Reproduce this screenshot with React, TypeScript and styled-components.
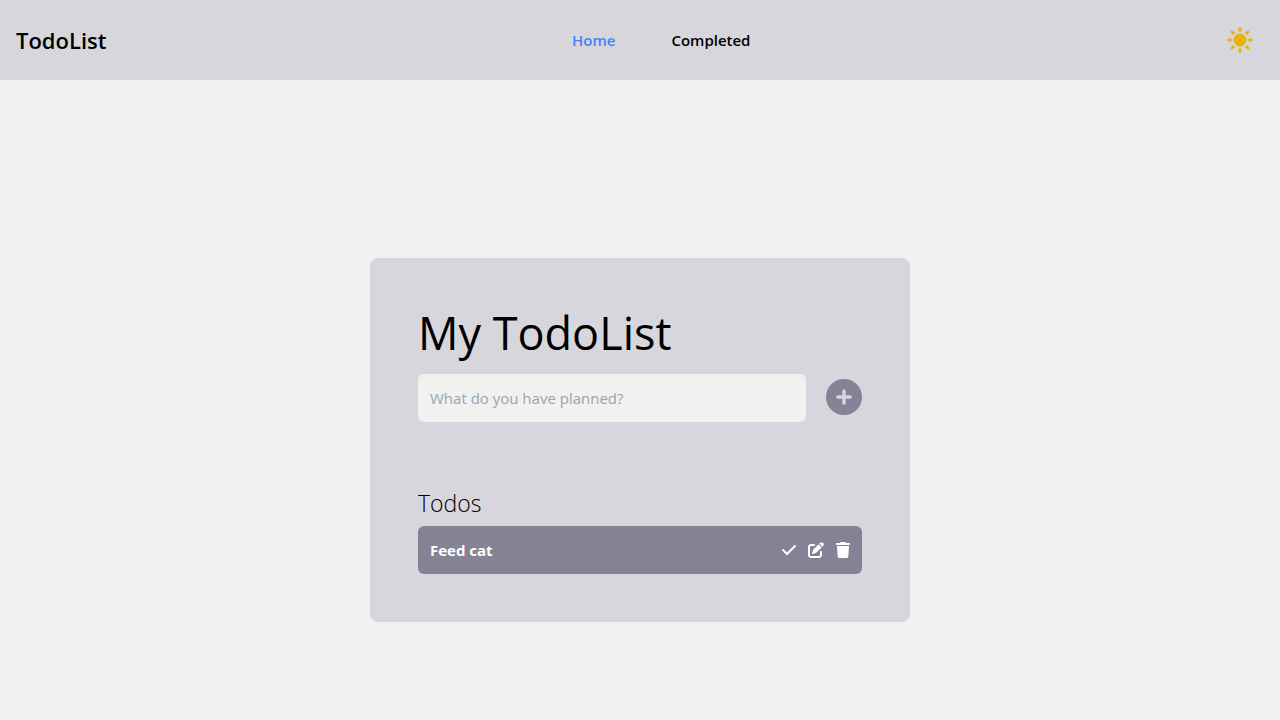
import React, { useState } from "react";
import styled, { createGlobalStyle } from "styled-components";
import { FaCheck, FaCirclePlus, FaPenToSquare, FaTrash } from "react-icons/fa6";
import { HiSun } from "react-icons/hi";

const GlobalStyle = createGlobalStyle`
  *, *::before, *::after { box-sizing: border-box; }
  body {
    margin: 0;
    background: #f1f1ef;
    color: #000;
    font-family: "Segoe UI", "Open Sans", "Noto Sans", sans-serif;
    font-size: 15px;
    line-height: 24px;
  }
  h1, h2, p, ul { margin: 0; padding: 0; }
  ul { list-style: none; }
  button {
    display: flex;
    border: 0;
    padding: 0;
    background: none;
    color: inherit;
    cursor: pointer;
  }
`;

const Header = styled.header`
  display: flex;
  align-items: center;
  justify-content: space-between;
  height: 80px;
  padding: 0 16px;
  background: #d7d6dc;
`;

const Brand = styled.p`
  font-size: 22px;
  line-height: 32px;
  font-weight: 600;
`;

const NavList = styled.ul`
  display: flex;
  gap: 56px;
`;

const NavLink = styled.a<{ $active?: boolean }>`
  color: ${(p) => (p.$active ? "#4480fa" : "#000")};
  font-weight: 600;
  text-decoration: none;
`;

const ThemeButton = styled.button`
  && { padding: 8px; }
  color: #eab308;
`;

const Main = styled.main`
  display: flex;
  align-items: center;
  justify-content: center;
  min-height: calc(100vh - 80px);
  padding: 80px 16px 0;
`;

const Card = styled.section`
  width: 100%;
  max-width: 540px;
  padding: 48px;
  border-radius: 8px;
  background: #d7d6dc;
`;

const Title = styled.h1`
  font-size: 45px;
  line-height: 54px;
  font-weight: 400;
`;

const AddForm = styled.form`
  display: flex;
  align-items: center;
  gap: 20px;
  margin: 14px 0 64px;
`;

const TextInput = styled.input`
  flex: 1;
  min-width: 0;
  height: 48px;
  padding: 0 12px;
  border: 0;
  border-radius: 6px;
  background: #f1f1ef;
  color: #000;
  font: inherit;
  &::placeholder { color: #9ca3af; opacity: 1; }
`;

const AddButton = styled.button`
  && { padding-bottom: 2px; }
  color: #848294;
`;

const ListTitle = styled.h2`
  margin-bottom: 6px;
  font-size: 23px;
  line-height: 34px;
  font-weight: 300;
`;

const TodoItem = styled.li`
  display: flex;
  align-items: center;
  justify-content: space-between;
  height: 48px;
  padding: 0 12px;
  border-radius: 6px;
  background: #848294;
  color: #fff;
  font-weight: 700;
`;

const Actions = styled.div`
  display: flex;
  gap: 12px;
`;

const ActionButton = styled.button<{ $width: number }>`
  svg {
    width: ${(p) => p.$width}px;
    height: 16px;
  }
`;

export default function App() {
  const [text, setText] = useState("");
  const [todos, setTodos] = useState(["Feed cat"]);

  const remove = (index: number) => setTodos(todos.filter((_, i) => i !== index));

  const add = (event: React.FormEvent) => {
    event.preventDefault();
    if (!text.trim()) return;
    setTodos([...todos, text.trim()]);
    setText("");
  };

  return (
    <>
      <GlobalStyle />
      <Header>
        <Brand>TodoList</Brand>
        <nav>
          <NavList>
            <li><NavLink href="#home" $active aria-current="page">Home</NavLink></li>
            <li><NavLink href="#completed">Completed</NavLink></li>
          </NavList>
        </nav>
        <ThemeButton type="button" aria-label="Toggle theme"><HiSun size={32} /></ThemeButton>
      </Header>
      <Main>
        <Card>
          <Title>My TodoList</Title>
          <AddForm onSubmit={add}>
            <TextInput
              aria-label="New todo"
              placeholder="What do you have planned?"
              value={text}
              onChange={(event) => setText(event.target.value)}
            />
            <AddButton type="submit" aria-label="Add todo"><FaCirclePlus size={36} /></AddButton>
          </AddForm>
          <ListTitle>Todos</ListTitle>
          <ul>
            {todos.map((todo, index) => (
              <TodoItem key={index}>
                <span>{todo}</span>
                <Actions>
                  <ActionButton $width={14} type="button" aria-label="Complete" onClick={() => remove(index)}><FaCheck /></ActionButton>
                  <ActionButton $width={16} type="button" aria-label="Edit" onClick={() => setText(todo)}><FaPenToSquare /></ActionButton>
                  <ActionButton $width={14} type="button" aria-label="Delete" onClick={() => remove(index)}><FaTrash /></ActionButton>
                </Actions>
              </TodoItem>
            ))}
          </ul>
        </Card>
      </Main>
    </>
  );
}
